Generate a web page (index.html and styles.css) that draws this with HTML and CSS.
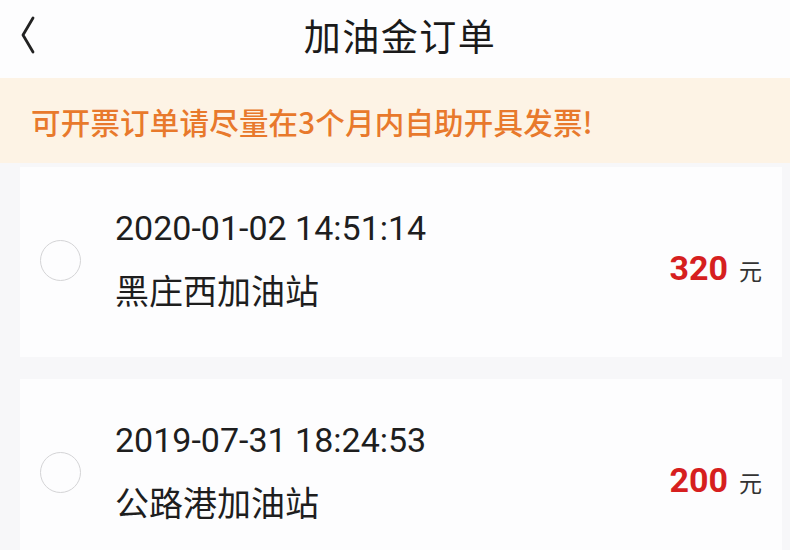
FILE: index.html
```html
<!DOCTYPE html>
<html lang="zh-CN">
<head>
<meta charset="utf-8">
<title>加油金订单</title>
<link rel="stylesheet" href="styles.css">
</head>
<body>
<div class="page">
  <header class="topbar">
    <span class="back">
      <svg width="16" height="38" viewBox="0 0 16 38"><polyline points="13,2 3,19 13,36" fill="none" stroke="#222" stroke-width="2.8" stroke-linecap="round" stroke-linejoin="round"/></svg>
    </span>
    <h1 class="title">加油金订单</h1>
  </header>
  <div class="notice">可开票订单请尽量在3个月内自助开具发票!</div>
  <div class="list">
    <div class="card">
      <span class="radio"></span>
      <div class="info">
        <div class="time">2020-01-02 14:51:14</div>
        <div class="station">黑庄西加油站</div>
      </div>
      <div class="amount"><span class="num">320</span><span class="unit">元</span></div>
    </div>
    <div class="card">
      <span class="radio"></span>
      <div class="info">
        <div class="time">2019-07-31 18:24:53</div>
        <div class="station">公路港加油站</div>
      </div>
      <div class="amount"><span class="num">200</span><span class="unit">元</span></div>
    </div>
  </div>
</div>
</body>
</html>
```
FILE: styles.css
```css
* { box-sizing: border-box; }
html, body { margin: 0; padding: 0; }
body {
  width: 790px;
  height: 550px;
  overflow: hidden;
  background: #f7f7f9;
  font-family: Roboto, "Noto Sans CJK SC", sans-serif;
  color: #1e1e1e;
}
.topbar {
  height: 78px;
  background: #fdfdfe;
  display: flex;
  align-items: center;
  justify-content: center;
  position: relative;
}
.back {
  position: absolute;
  left: 20px;
  top: 16px;
  display: flex;
}
.title {
  margin: 0;
  font-family: "Noto Sans CJK SC", sans-serif;
  font-weight: 400;
  font-size: 37px;
  line-height: 1;
  letter-spacing: 1.5px;
  color: #1a1a1a;
  margin-left: 10px;
  margin-top: -8px;
}
.notice {
  height: 85px;
  background: #fdf3e5;
  color: #e8792c;
  font-family: "Noto Sans CJK SC", sans-serif;
  font-weight: 500;
  font-size: 29.5px;
  display: flex;
  align-items: center;
  padding-left: 31px;
  letter-spacing: 0.2px;
}
.list {
  padding: 4px 8px 0 20px;
  display: flex;
  flex-direction: column;
  gap: 22px;
}
.card {
  background: #fdfdfe;
  height: 190px;
  flex: none;
  display: flex;
  align-items: center;
  padding: 0 20px 0 20px;
}
.radio {
  width: 41px;
  height: 41px;
  border-radius: 50%;
  border: 1.5px solid #d4d4d6;
  flex: none;
  margin-top: -4px;
}
.info {
  flex: 1;
  margin-left: 34px;
  display: flex;
  flex-direction: column;
  gap: 22px;
  margin-top: -6px;
}
.time {
  font-size: 34px;
  line-height: 40px;
  color: #1e1e1e;
}
.station {
  font-family: "Noto Sans CJK SC", sans-serif;
  font-size: 34px;
  line-height: 40px;
  color: #1e1e1e;
}
.amount {
  display: flex;
  align-items: baseline;
  margin-top: 12px;
}
.num {
  font-family: Roboto, sans-serif;
  font-weight: 700;
  font-size: 34px;
  color: #d61f1f;
}
.unit {
  font-family: "Noto Sans CJK SC", sans-serif;
  font-size: 23px;
  color: #333;
  margin-left: 11px;
}
```
